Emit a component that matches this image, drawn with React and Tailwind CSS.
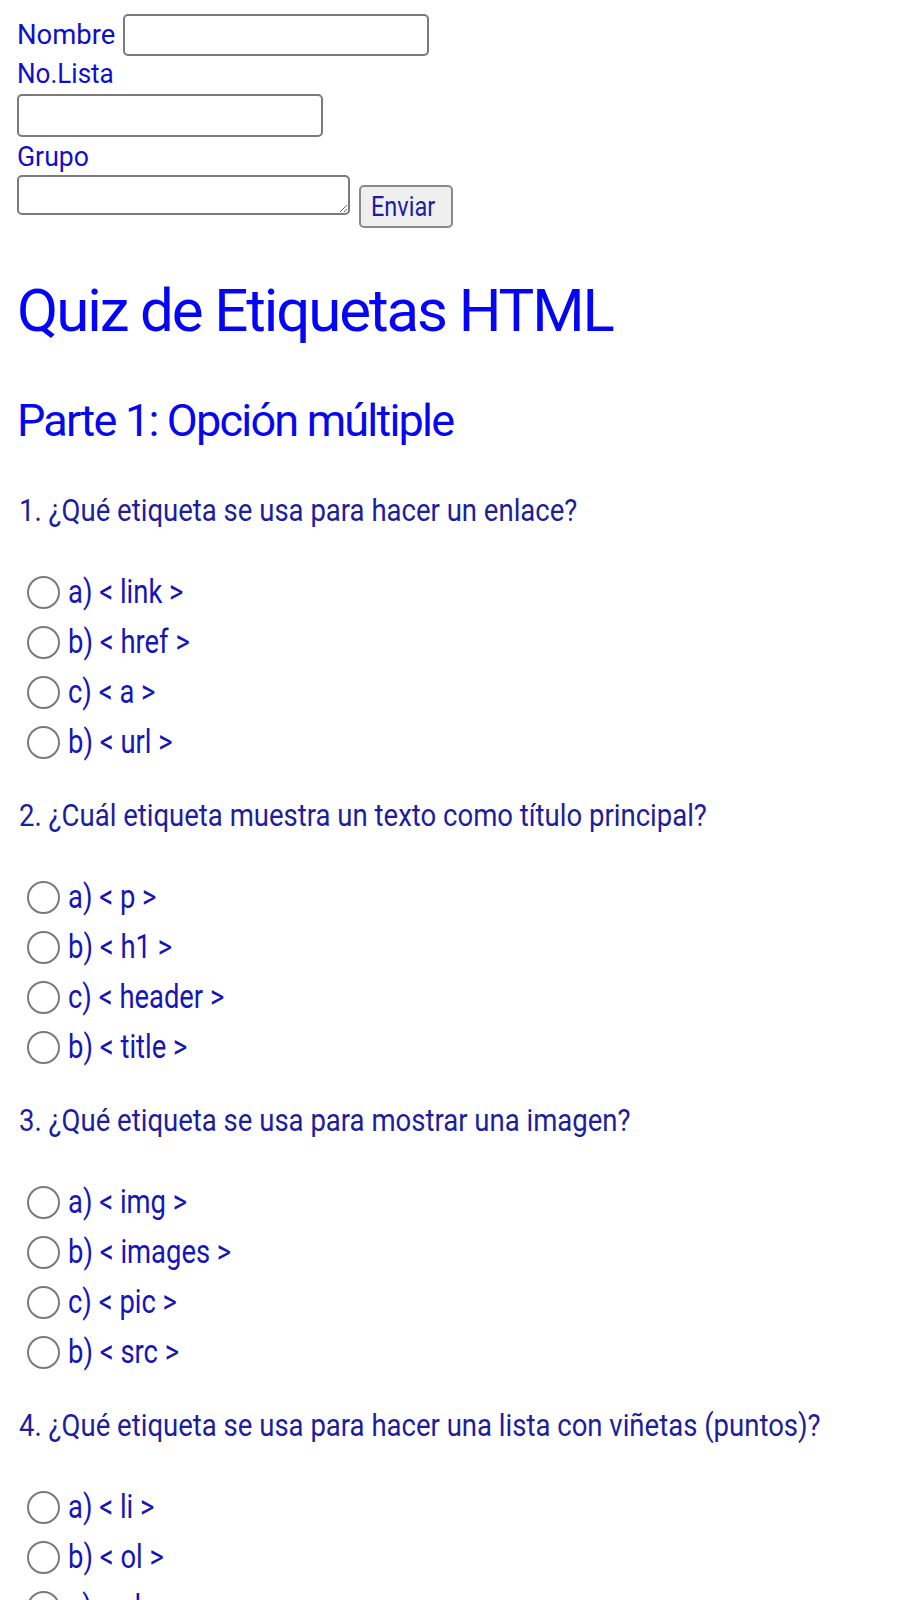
import React from "react";

const questions = [
  {
    q: "1. ¿Qué etiqueta se usa para hacer un enlace?",
    opts: ["a) < link >", "b) < href >", "c) < a >", "b) < url >"],
  },
  {
    q: "2. ¿Cuál etiqueta muestra un texto como título principal?",
    opts: ["a) < p >", "b) < h1 >", "c) < header >", "b) < title >"],
  },
  {
    q: "3. ¿Qué etiqueta se usa para mostrar una imagen?",
    opts: ["a) < img >", "b) < images >", "c) < pic >", "b) < src >"],
  },
  {
    q: "4. ¿Qué etiqueta se usa para hacer una lista con viñetas (puntos)?",
    opts: ["a) < li >", "b) < ol >", "c) < ul >", "b) < dl >"],
  },
];

function Narrow({ children, className = "scale-x-[0.86]" }) {
  return (
    <span className={"inline-block origin-left whitespace-nowrap " + className}>
      {children}
    </span>
  );
}

export default function App() {
  return (
    <div
      className="min-h-[1600px] bg-white px-[17px] pt-[14px]"
      style={{ fontFamily: "Roboto, 'Noto Sans', sans-serif" }}
    >
      <form className="flex flex-col items-start" onSubmit={(e) => e.preventDefault()}>
        <div className="flex h-[42px] items-center">
          <label className="text-[28px] leading-[32px] text-[#0f0fc6]">
            <Narrow className="scale-x-[0.98]">Nombre</Narrow>
          </label>
          <input
            type="text"
            className="ml-[6px] h-[42px] w-[306px] rounded-[5px] border-2 border-[#7b7b7b] bg-white"
          />
        </div>
        <label className="mt-[2px] h-[32px] text-[28px] leading-[32px] text-[#0f0fc6]">
          <Narrow className="scale-x-[0.93]">No.Lista</Narrow>
        </label>
        <input
          type="text"
          className="mt-[4px] h-[43px] w-[306px] rounded-[5px] border-2 border-[#7b7b7b] bg-white"
        />
        <label className="mt-[4px] h-[32px] text-[28px] leading-[32px] text-[#0f0fc6]">
          <Narrow className="scale-x-[0.95]">Grupo</Narrow>
        </label>
        <div className="mt-[2px] flex items-start">
          <textarea className="h-[40px] w-[333px] rounded-[5px] border-2 border-[#7b7b7b] bg-white" />
          <button
            type="submit"
            className="ml-[9px] mt-[10px] flex h-[43px] w-[94px] items-center justify-center rounded-[5px] border-2 border-[#8a8a8a] bg-[#efefef] pl-[6px] text-[28px] text-[#1c1ca8]"
          >
            <Narrow className="scale-x-[0.84]">Enviar</Narrow>
          </button>
        </div>
      </form>

      <h1 className="mt-[48px] h-[70px] text-[60px] leading-[70px] tracking-[-0.035em] text-[#0505f5]">
        Quiz de Etiquetas HTML
      </h1>
      <h2 className="mt-[49px] h-[51px] text-[45px] leading-[51px] tracking-[-0.04em] text-[#0707ee]">
        Parte 1: Opción múltiple
      </h2>

      <div className="mt-[44px] flex flex-col gap-[28px]">
        {questions.map((item, qi) => (
          <div key={qi} className="flex flex-col">
            <p className="flex h-[40px] items-center pl-[2px] text-[32px] text-[#1e1e9c]">
              <Narrow>{item.q}</Narrow>
            </p>
            <div className="mt-[37px] flex flex-col">
              {item.opts.map((o, oi) => (
                <label key={oi} className="flex h-[50px] items-center pl-[10px]">
                  <input
                    type="radio"
                    name={"q" + qi}
                    className="h-[33px] w-[33px] shrink-0 appearance-none rounded-full border-2 border-[#7a7a7a] bg-white"
                  />
                  <span className="ml-[8px] text-[33px] text-[#1616b6]">
                    <Narrow className="scale-x-[0.83]">{o}</Narrow>
                  </span>
                </label>
              ))}
            </div>
          </div>
        ))}
      </div>
    </div>
  );
}
